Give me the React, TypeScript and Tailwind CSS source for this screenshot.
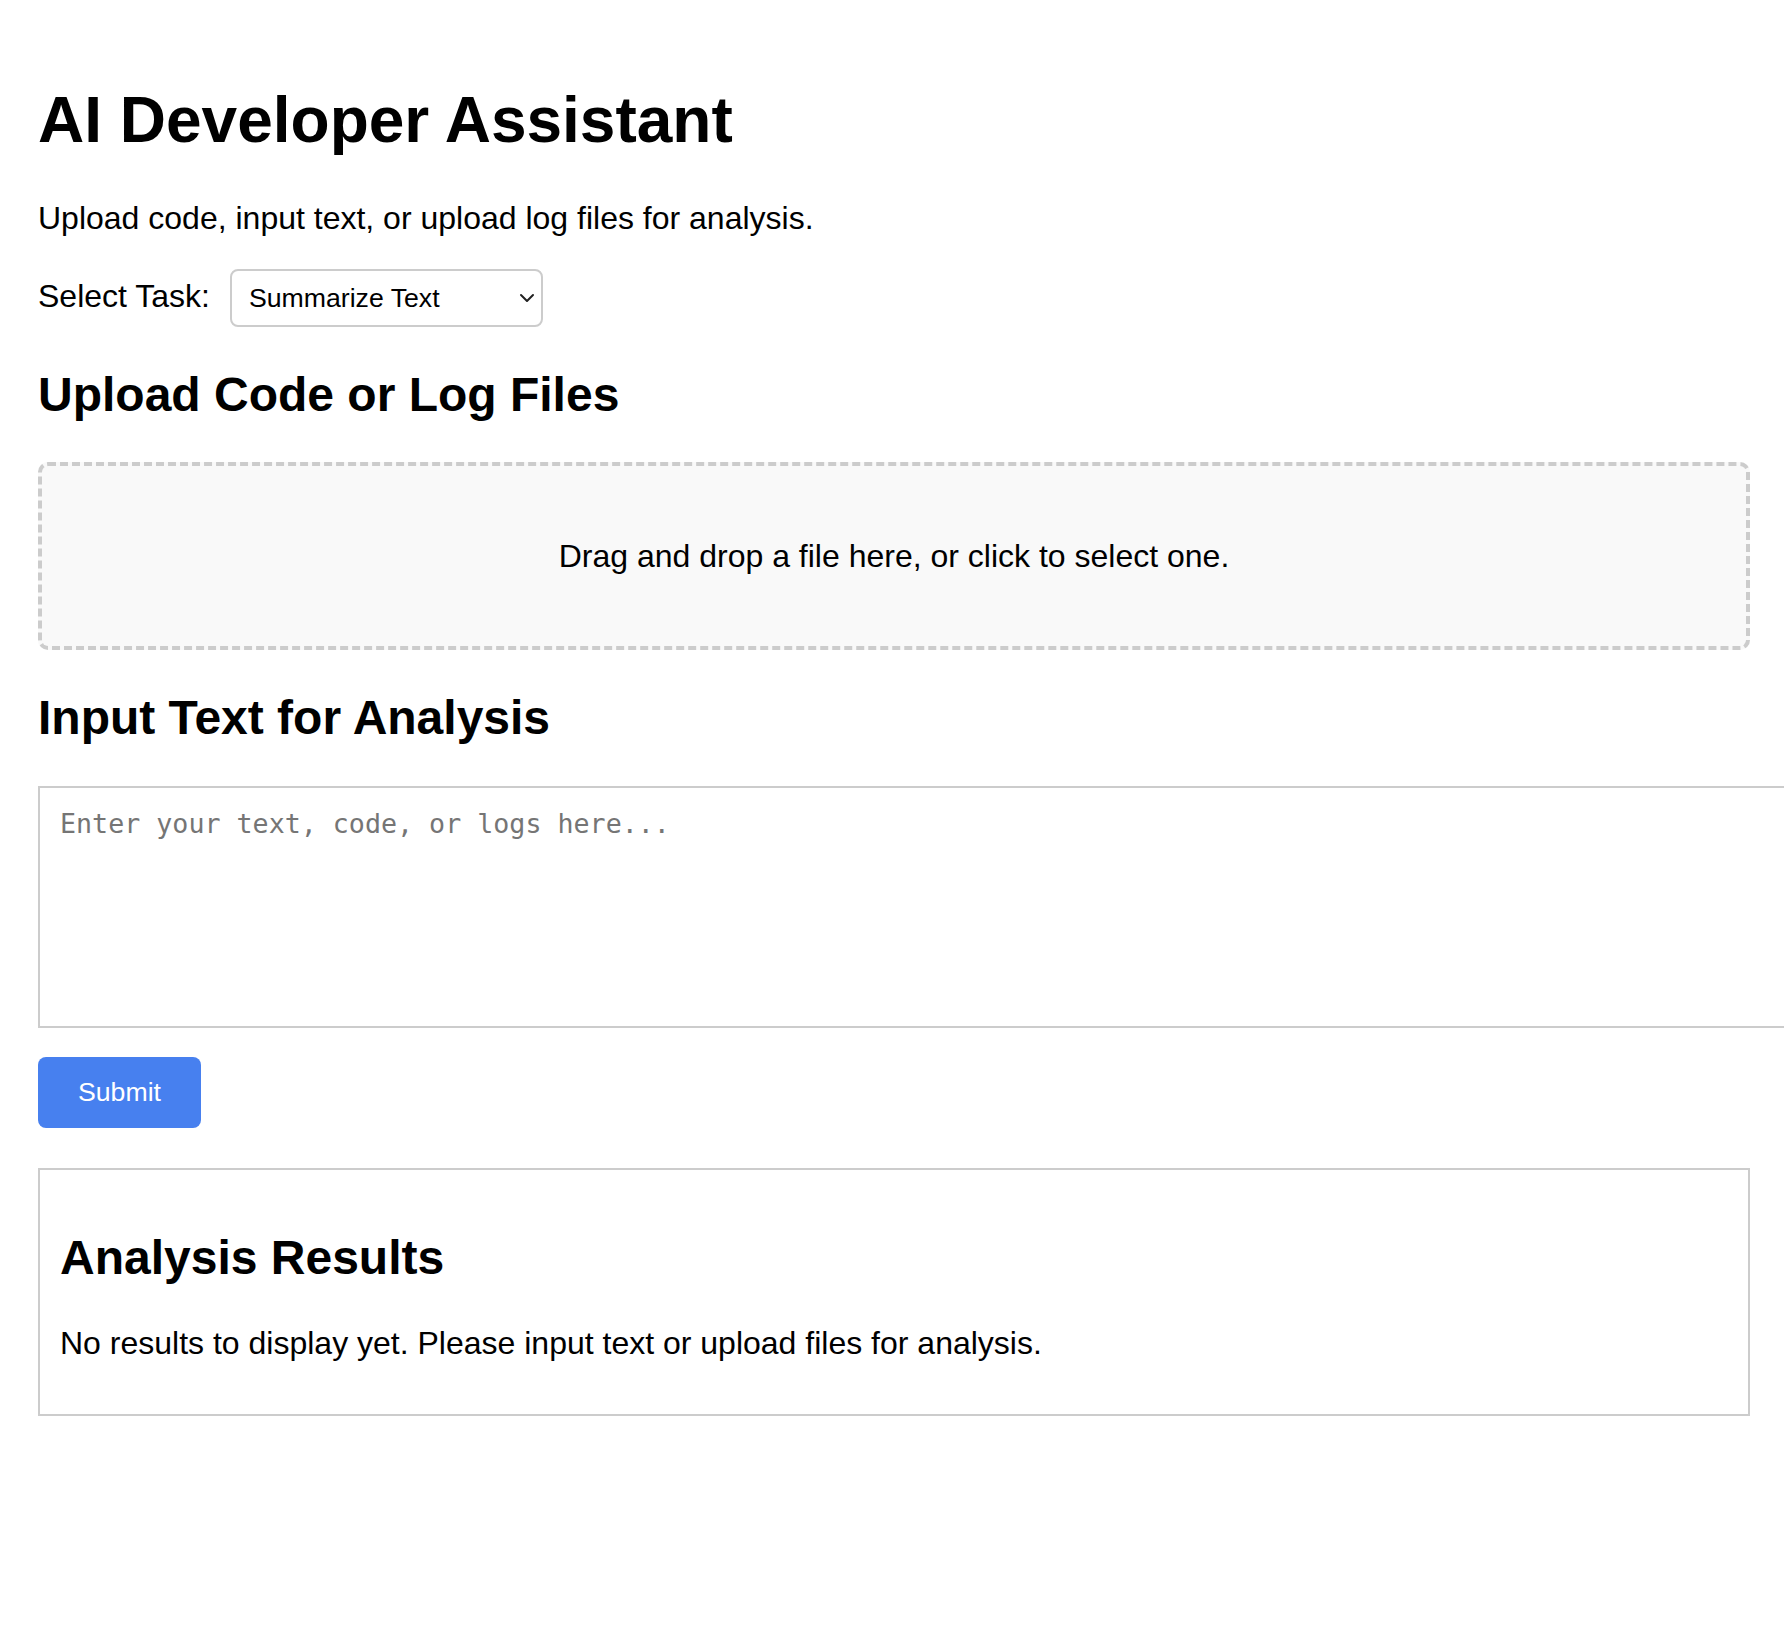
import { useState } from 'react'

const tasks = ['Summarize Text', 'Analyze Code', 'Analyze Logs']

export default function App() {
  const [task, setTask] = useState(tasks[0])
  const [text, setText] = useState('')

  return (
    <div className="min-h-screen overflow-x-hidden bg-white font-['Liberation_Sans',Arial,sans-serif] text-black">
      <div className="pl-[38px] pr-[34px] pt-[40px] pb-[40px]">
        <h1 className="mt-[43px] mb-[43px] text-[64px] font-bold leading-[74px]">AI Developer Assistant</h1>
        <p className="my-[32px] text-[32px] leading-[37px]">Upload code, input text, or upload log files for analysis.</p>

        <div className="flex items-baseline">
          <label htmlFor="task" className="mr-[20px] text-[32px] leading-[37px]">Select Task:</label>
          <div className="relative">
            <select
              id="task"
              value={task}
              onChange={(e) => setTask(e.target.value)}
              className="h-[58px] w-[313px] appearance-none rounded-[8px] border-2 border-[#cccccc] bg-white pl-[17px] pr-[40px] text-[26.67px] leading-[31px] text-black focus:outline-none"
            >
              {tasks.map((t) => (
                <option key={t} value={t}>{t}</option>
              ))}
            </select>
            <svg
              className="pointer-events-none absolute right-[8px] top-1/2 h-[10px] w-[16px] -translate-y-1/2"
              viewBox="0 0 16 10"
              fill="none"
              stroke="#222"
              strokeWidth="2"
              strokeLinecap="round"
              strokeLinejoin="round"
            >
              <path d="M2 2l6 6 6-6" />
            </svg>
          </div>
        </div>

        <h2 className="mt-[40px] mb-[40px] text-[48px] font-bold leading-[55px]">Upload Code or Log Files</h2>
        <div className="flex h-[188px] cursor-pointer items-center justify-center rounded-[10px] border-4 border-dashed border-[#cccccc] bg-[#f9f9f9] text-[32px] leading-[37px]">
          Drag and drop a file here, or click to select one.
        </div>

        <h2 className="mt-[40px] mb-[41px] text-[48px] font-bold leading-[55px]">Input Text for Analysis</h2>
        <textarea
          value={text}
          onChange={(e) => setText(e.target.value)}
          placeholder="Enter your text, code, or logs here..."
          className="block h-[242px] w-[1756px] max-w-none border-2 border-[#cccccc] p-[20px] font-['DejaVu_Sans_Mono',monospace] text-[26.67px] leading-[31px] text-black placeholder:text-[#757575] focus:outline-none"
        />

        <button
          type="button"
          className="mt-[29px] rounded-[8px] bg-[#4780ef] px-[40px] py-[20px] text-[26.67px] leading-[31px] text-white"
        >
          Submit
        </button>

        <div className="mt-[40px] border-2 border-[#cccccc] p-[20px]">
          <h2 className="mt-[40px] mb-[40px] text-[48px] font-bold leading-[55px]">Analysis Results</h2>
          <p className="my-[32px] text-[32px] leading-[37px]">No results to display yet. Please input text or upload files for analysis.</p>
        </div>
      </div>
    </div>
  )
}
